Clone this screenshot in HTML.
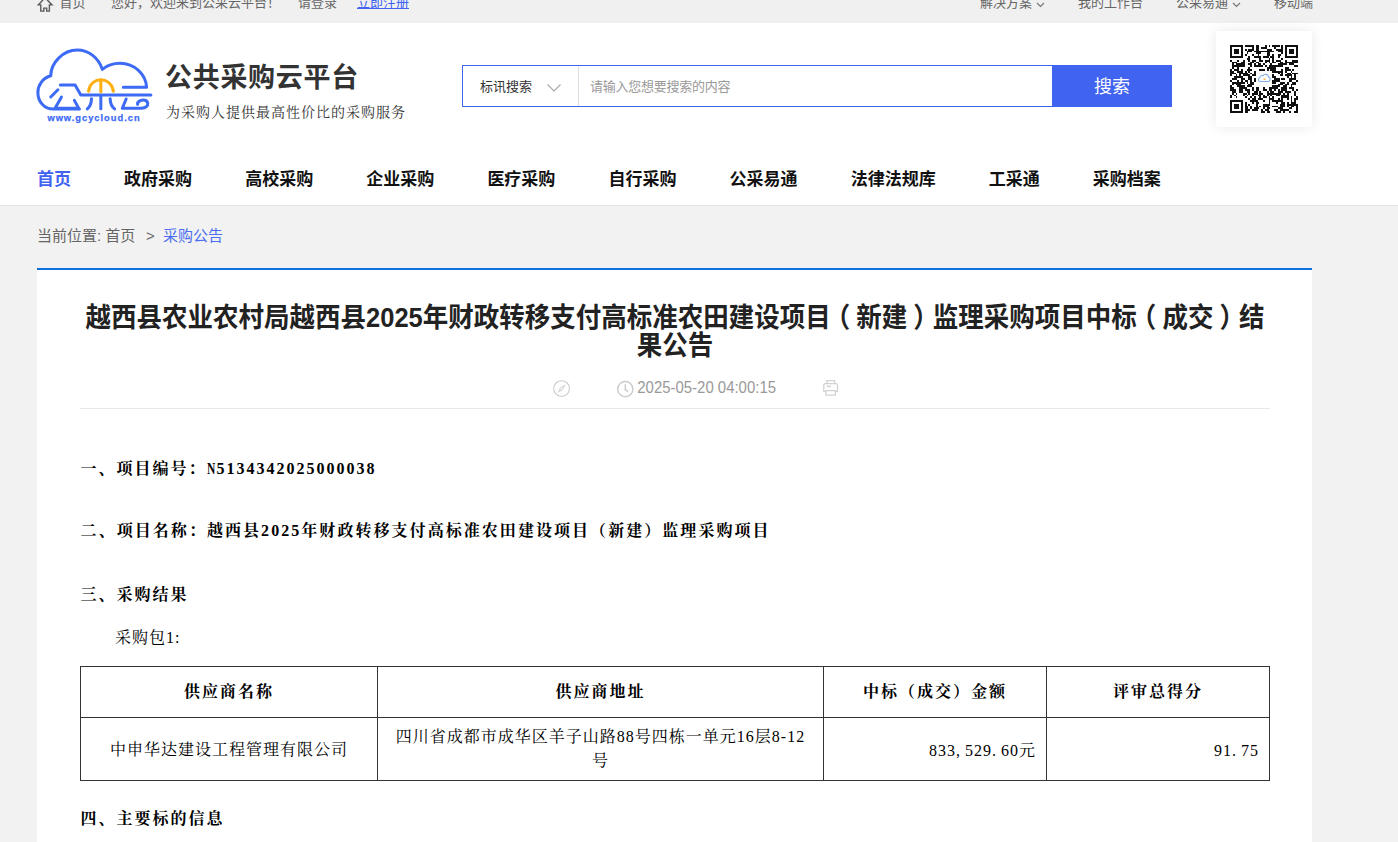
<!DOCTYPE html>
<html lang="zh-CN">
<head>
<meta charset="utf-8">
<title>公共采购云平台</title>
<style>
*{box-sizing:border-box;margin:0;padding:0}
html,body{width:1398px;height:842px;overflow:hidden;background:#f2f2f2}
body{position:relative;font-family:"Liberation Sans","Noto Sans CJK SC",sans-serif;color:#333;-webkit-font-smoothing:antialiased}
.abs{position:absolute;white-space:nowrap}
.topbar{left:0;top:-18px;width:1398px;height:40.5px;background:#f0f0f0;font-size:13px;color:#666}
.topbar span{position:absolute;top:1px;line-height:40px;white-space:nowrap}
.header{left:0;top:22.5px;width:1398px;height:183.5px;background:#fff;border-bottom:1px solid #e4e4e4}
.sitename{left:165px;top:59.3px;font-size:27px;font-weight:700;color:#333;line-height:38px;letter-spacing:0.7px}
.slogan{left:166px;top:102.5px;font-size:14px;line-height:20px;color:#333;font-family:"Liberation Serif","Noto Serif CJK SC",serif;letter-spacing:1px}
.search{left:462px;top:65px;width:590px;height:42px;border:1px solid #4063f0;border-right:0;background:#fff}
.search .sel{position:absolute;left:0;top:0;width:116px;height:40px;border-right:1px solid #ddd;font-size:13px;line-height:42px;padding-left:17px;color:#333}
.search .ph{position:absolute;left:127px;top:0;line-height:42px;font-size:13px;color:#999;letter-spacing:-0.25px}
.btn{left:1052px;top:65px;width:120px;height:42px;background:#4063f0;color:#fff;font-size:18px;line-height:44px;text-align:center}
.qr{left:1216px;top:31px;width:96px;height:96px;background:#fff;box-shadow:0 0 12px rgba(0,0,0,.09)}
.nav{left:37px;top:165px;font-size:17px;font-weight:700;line-height:30px;color:#111}
.nav span{display:inline-block;margin-right:53.1px}
.nav span.on{color:#4063f0}
.crumb{left:37px;top:225px;font-size:15px;line-height:22px;color:#666}
.crumb b{font-weight:400;color:#4a6cf0}
.card{left:37px;top:268px;width:1275px;height:600px;background:#fff;border-top:2px solid #0f6fdb}
.title{left:80px;top:302.8px;transform:scaleY(1.08);transform-origin:50% 55%;width:1190px;text-align:center;font-size:25.5px;line-height:28px;font-weight:700;color:#222;white-space:nowrap}
.title i{font-style:normal;position:relative}.title .pl{left:-6px}.title .pr{left:6px}
.meta{font-size:14.95px;transform:scaleY(1.08);transform-origin:0 78%;color:#999;line-height:20px}
.hr{left:80px;top:408px;width:1190px;height:1px;background:#e8e8e8}
.bt{font-family:"Liberation Serif","Noto Serif CJK SC",serif;font-size:16px;line-height:24px;color:#000}
.h{font-weight:700;letter-spacing:2px}
.n{display:inline-block;width:10px;transform:scaleX(.72);transform-origin:0 50%}
.p{display:inline-block;width:9px;text-align:left}
table{position:absolute;left:80px;top:666px;width:1189px;border-collapse:collapse;table-layout:fixed;font-family:"Liberation Serif","Noto Serif CJK SC",serif;font-size:16px;color:#000}
td,th{border:1px solid #333;text-align:center;vertical-align:middle;letter-spacing:1px;line-height:24px}
th{height:51px;font-weight:700;letter-spacing:2px}
td{height:63px;padding-top:2px}
td.r{text-align:right;padding-right:10px;padding-top:3px}
</style>
</head>
<body>
<div class="abs topbar">
  <svg style="position:absolute;left:36.5px;top:14px" width="17" height="17" viewBox="0 0 17 17" fill="none" stroke="#5a5a5a" stroke-width="1.4" stroke-linejoin="miter"><path d="M8.1 1.7 1.2 8.9H3.8V15.1H6.8V12.1H9.7V15.1H12.4V8.9H15Z"/></svg>
  <span style="left:59.5px">首页</span>
  <span style="left:111px">您好，欢迎来到公采云平台！</span>
  <span style="left:298px">请登录</span>
  <span style="left:357px;color:#4063f0;text-decoration:underline">立即注册</span>
  <span style="left:980px">解决方案</span>
  <svg style="position:absolute;left:1035.7px;top:20px" width="9" height="6" viewBox="0 0 9 6" fill="none" stroke="#777" stroke-width="1.2"><path d="M1 1l3.5 3.5L8 1"/></svg>
  <span style="left:1078px">我的工作台</span>
  <span style="left:1176px">公采易通</span>
  <svg style="position:absolute;left:1231.7px;top:20px" width="9" height="6" viewBox="0 0 9 6" fill="none" stroke="#777" stroke-width="1.2"><path d="M1 1l3.5 3.5L8 1"/></svg>
  <span style="left:1274px">移动端</span>
</div>
<div class="abs header"></div>

<svg class="abs" style="left:0;top:0" width="230" height="140" viewBox="0 0 230 140">
 <g transform="translate(20,30) scale(0.14306)" fill="none" stroke="#3d6bf5" stroke-width="21" stroke-linecap="round" stroke-linejoin="round">
  <path d="M415 552 H232 C170 552 125 500 125 438 C125 385 160 335 215 320 C215 230 300 140 400 140 C480 140 550 195 575 275 C610 245 655 232 700 232 C800 232 880 310 885 400 H722"/>
  <path d="M265 418 L215 468"/>
  <path d="M282 385 H385 L425 455 H915"/>
  <path d="M290 468 L245 547 H405"/>
  <path d="M380 492 L412 550"/>
  <path d="M565 462 V550"/>
  <path d="M500 480 C498 515 490 538 470 552"/>
  <path d="M630 480 C632 515 640 538 662 552"/>
  <path d="M742 482 L715 547 H850 C880 547 895 530 893 512 C890 490 860 485 838 495 C825 502 820 512 822 520"/>
  <g stroke="#fdae10">
   <path d="M482 415 C490 375 525 348 565 348 C605 348 640 375 650 415"/>
   <path d="M565 350 V432"/>
  </g>
  <g stroke="none" fill="#fdae10"><circle cx="480" cy="426" r="12"/><circle cx="652" cy="426" r="12"/></g>
 </g>
 <text x="94" y="121.3" text-anchor="middle" font-family="Liberation Sans, sans-serif" font-weight="700" font-size="9.3" letter-spacing="1" fill="#3d6bf5" stroke="#3d6bf5" stroke-width="0.25">www.gcycloud.cn</text>
</svg>
<div class="abs sitename">公共采购云平台</div>
<div class="abs slogan">为采购人提供最高性价比的采购服务</div>

<div class="abs search">
  <div class="sel">标讯搜索</div>
  <svg style="position:absolute;left:83.3px;top:16.5px" width="16" height="10" viewBox="0 0 16 10" fill="none" stroke="#aaa" stroke-width="1.2"><path d="M1.5 1.5 8 8l6.5-6.5"/></svg>
  <div class="ph">请输入您想要搜索的内容</div>
</div>
<div class="abs btn">搜索</div>
<div class="abs qr">
  <svg style="position:absolute;left:14px;top:14px" width="68" height="68" viewBox="0 0 37 37" shape-rendering="crispEdges"><path fill="#111" d="M0 0h7v1h-7zM8 0h5v1h-5zM14 0h2v1h-2zM19 0h1v1h-1zM21 0h1v1h-1zM23 0h4v1h-4zM28 0h1v1h-1zM30 0h7v1h-7zM0 1h1v1h-1zM6 1h1v1h-1zM12 1h1v1h-1zM14 1h2v1h-2zM17 1h3v1h-3zM24 1h1v1h-1zM28 1h1v1h-1zM30 1h1v1h-1zM36 1h1v1h-1zM0 2h1v1h-1zM2 2h3v1h-3zM6 2h1v1h-1zM8 2h1v1h-1zM10 2h3v1h-3zM14 2h2v1h-2zM20 2h3v1h-3zM25 2h4v1h-4zM30 2h1v1h-1zM32 2h3v1h-3zM36 2h1v1h-1zM0 3h1v1h-1zM2 3h3v1h-3zM6 3h1v1h-1zM9 3h3v1h-3zM13 3h11v1h-11zM26 3h3v1h-3zM30 3h1v1h-1zM32 3h3v1h-3zM36 3h1v1h-1zM0 4h1v1h-1zM2 4h3v1h-3zM6 4h1v1h-1zM9 4h1v1h-1zM14 4h3v1h-3zM20 4h2v1h-2zM28 4h1v1h-1zM30 4h1v1h-1zM32 4h3v1h-3zM36 4h1v1h-1zM0 5h1v1h-1zM6 5h1v1h-1zM8 5h1v1h-1zM12 5h1v1h-1zM15 5h1v1h-1zM20 5h2v1h-2zM23 5h1v1h-1zM26 5h2v1h-2zM30 5h1v1h-1zM36 5h1v1h-1zM0 6h7v1h-7zM10 6h1v1h-1zM13 6h4v1h-4zM18 6h3v1h-3zM22 6h2v1h-2zM26 6h1v1h-1zM30 6h7v1h-7zM9 7h2v1h-2zM16 7h1v1h-1zM21 7h1v1h-1zM23 7h1v1h-1zM28 7h1v1h-1zM0 8h1v1h-1zM4 8h1v1h-1zM7 8h1v1h-1zM10 8h1v1h-1zM12 8h2v1h-2zM16 8h2v1h-2zM19 8h3v1h-3zM23 8h1v1h-1zM25 8h3v1h-3zM30 8h1v1h-1zM34 8h3v1h-3zM1 9h3v1h-3zM6 9h2v1h-2zM11 9h2v1h-2zM14 9h2v1h-2zM19 9h1v1h-1zM21 9h1v1h-1zM23 9h2v1h-2zM27 9h2v1h-2zM30 9h7v1h-7zM1 10h1v1h-1zM3 10h5v1h-5zM10 10h2v1h-2zM13 10h1v1h-1zM15 10h2v1h-2zM18 10h1v1h-1zM22 10h1v1h-1zM26 10h5v1h-5zM32 10h3v1h-3zM1 11h7v1h-7zM11 11h1v1h-1zM13 11h5v1h-5zM19 11h1v1h-1zM21 11h8v1h-8zM35 11h2v1h-2zM1 12h1v1h-1zM4 12h1v1h-1zM10 12h1v1h-1zM20 12h5v1h-5zM30 12h2v1h-2zM0 13h1v1h-1zM2 13h3v1h-3zM6 13h1v1h-1zM9 13h3v1h-3zM16 13h3v1h-3zM20 13h1v1h-1zM22 13h3v1h-3zM28 13h1v1h-1zM30 13h3v1h-3zM34 13h1v1h-1zM0 14h2v1h-2zM4 14h3v1h-3zM8 14h1v1h-1zM10 14h1v1h-1zM13 14h1v1h-1zM23 14h6v1h-6zM30 14h1v1h-1zM33 14h1v1h-1zM0 15h3v1h-3zM5 15h5v1h-5zM11 15h1v1h-1zM13 15h1v1h-1zM26 15h1v1h-1zM28 15h1v1h-1zM31 15h2v1h-2zM34 15h3v1h-3zM0 16h1v1h-1zM3 16h1v1h-1zM5 16h1v1h-1zM7 16h4v1h-4zM12 16h2v1h-2zM23 16h1v1h-1zM27 16h2v1h-2zM30 16h4v1h-4zM35 16h1v1h-1zM2 17h5v1h-5zM10 17h2v1h-2zM23 17h2v1h-2zM31 17h1v1h-1zM33 17h1v1h-1zM35 17h1v1h-1zM1 18h3v1h-3zM6 18h2v1h-2zM10 18h2v1h-2zM13 18h1v1h-1zM24 18h3v1h-3zM28 18h2v1h-2zM32 18h4v1h-4zM0 19h1v1h-1zM4 19h1v1h-1zM6 19h1v1h-1zM8 19h2v1h-2zM11 19h1v1h-1zM13 19h1v1h-1zM23 19h4v1h-4zM32 19h2v1h-2zM36 19h1v1h-1zM1 20h7v1h-7zM9 20h1v1h-1zM11 20h2v1h-2zM23 20h2v1h-2zM27 20h3v1h-3zM31 20h1v1h-1zM34 20h2v1h-2zM1 21h1v1h-1zM3 21h3v1h-3zM10 21h3v1h-3zM26 21h3v1h-3zM30 21h2v1h-2zM33 21h3v1h-3zM0 22h1v1h-1zM4 22h4v1h-4zM9 22h3v1h-3zM23 22h4v1h-4zM29 22h2v1h-2zM33 22h1v1h-1zM0 23h2v1h-2zM5 23h4v1h-4zM12 23h1v1h-1zM14 23h2v1h-2zM18 23h1v1h-1zM21 23h5v1h-5zM28 23h3v1h-3zM32 23h3v1h-3zM0 24h3v1h-3zM5 24h2v1h-2zM8 24h3v1h-3zM12 24h1v1h-1zM14 24h2v1h-2zM18 24h2v1h-2zM21 24h2v1h-2zM24 24h1v1h-1zM26 24h1v1h-1zM28 24h3v1h-3zM34 24h1v1h-1zM36 24h1v1h-1zM1 25h2v1h-2zM5 25h2v1h-2zM9 25h2v1h-2zM13 25h2v1h-2zM16 25h1v1h-1zM20 25h1v1h-1zM22 25h2v1h-2zM26 25h3v1h-3zM30 25h3v1h-3zM35 25h1v1h-1zM1 26h1v1h-1zM3 26h1v1h-1zM7 26h2v1h-2zM10 26h1v1h-1zM12 26h3v1h-3zM16 26h2v1h-2zM20 26h8v1h-8zM29 26h1v1h-1zM31 26h1v1h-1zM35 26h1v1h-1zM0 27h1v1h-1zM2 27h1v1h-1zM7 27h1v1h-1zM9 27h1v1h-1zM12 27h1v1h-1zM15 27h2v1h-2zM18 27h1v1h-1zM20 27h1v1h-1zM22 27h1v1h-1zM25 27h2v1h-2zM28 27h4v1h-4zM35 27h1v1h-1zM0 28h1v1h-1zM3 28h1v1h-1zM8 28h1v1h-1zM11 28h1v1h-1zM13 28h1v1h-1zM16 28h1v1h-1zM18 28h2v1h-2zM21 28h1v1h-1zM23 28h1v1h-1zM28 28h4v1h-4zM33 28h1v1h-1zM36 28h1v1h-1zM10 29h1v1h-1zM12 29h2v1h-2zM15 29h3v1h-3zM21 29h3v1h-3zM26 29h1v1h-1zM28 29h1v1h-1zM31 29h1v1h-1zM33 29h1v1h-1zM35 29h2v1h-2zM0 30h7v1h-7zM11 30h4v1h-4zM18 30h1v1h-1zM21 30h1v1h-1zM23 30h6v1h-6zM33 30h1v1h-1zM35 30h1v1h-1zM0 31h1v1h-1zM6 31h1v1h-1zM8 31h1v1h-1zM12 31h1v1h-1zM14 31h2v1h-2zM21 31h1v1h-1zM25 31h1v1h-1zM28 31h2v1h-2zM31 31h1v1h-1zM33 31h3v1h-3zM0 32h1v1h-1zM2 32h3v1h-3zM6 32h1v1h-1zM8 32h1v1h-1zM10 32h1v1h-1zM14 32h1v1h-1zM18 32h4v1h-4zM27 32h3v1h-3zM31 32h6v1h-6zM0 33h1v1h-1zM2 33h3v1h-3zM6 33h1v1h-1zM8 33h2v1h-2zM11 33h1v1h-1zM14 33h1v1h-1zM16 33h1v1h-1zM18 33h3v1h-3zM23 33h3v1h-3zM27 33h3v1h-3zM31 33h1v1h-1zM33 33h2v1h-2zM36 33h1v1h-1zM0 34h1v1h-1zM2 34h3v1h-3zM6 34h1v1h-1zM8 34h2v1h-2zM11 34h1v1h-1zM13 34h3v1h-3zM18 34h1v1h-1zM20 34h2v1h-2zM26 34h3v1h-3zM32 34h2v1h-2zM36 34h1v1h-1zM0 35h1v1h-1zM6 35h1v1h-1zM8 35h3v1h-3zM12 35h3v1h-3zM17 35h1v1h-1zM19 35h2v1h-2zM24 35h2v1h-2zM27 35h5v1h-5zM36 35h1v1h-1zM0 36h7v1h-7zM8 36h2v1h-2zM17 36h2v1h-2zM20 36h2v1h-2zM25 36h3v1h-3zM29 36h1v1h-1zM32 36h1v1h-1zM35 36h2v1h-2z"/>
  <g shape-rendering="auto" fill="none" stroke="#7fb0e8" stroke-width="0.6"><path d="M16.3 19.9h4.6a1.3 1.3 0 0 0 .1-2.5 1.7 1.7 0 0 0-3.1-.7 1.2 1.2 0 0 0-1.7 1.1 1.1 1.1 0 0 0 .1 2.1z"/><path d="M18.2 18.6h1.2" stroke="#f5a623"/></g></svg>
</div>

<div class="abs nav"><span class="on">首页</span><span>政府采购</span><span>高校采购</span><span>企业采购</span><span>医疗采购</span><span>自行采购</span><span>公采易通</span><span>法律法规库</span><span>工采通</span><span>采购档案</span></div>

<div class="abs crumb">当前位置: 首页</div><div class="abs crumb" style="left:146px">&gt;</div><div class="abs crumb" style="left:163px"><b>采购公告</b></div>

<div class="abs card"></div>
<div class="abs title">越西县农业农村局越西县2025年财政转移支付高标准农田建设项目<i class="pl">（</i>新建<i class="pr">）</i>监理采购项目中标<i class="pl">（</i>成交<i class="pr">）</i>结</div>
<div class="abs title" style="top:330.8px">果公告</div>

<svg class="abs" style="left:552px;top:379px" width="20" height="20" viewBox="0 0 20 20" fill="none" stroke="#ccc" stroke-width="1.1"><circle cx="9.6" cy="9.6" r="7.9"/><path d="M13.9 5.3 8.3 8.3 5.3 13.9l5.6-3z" fill="#d8d8d8" stroke="none"/><circle cx="9.6" cy="9.6" r="1" fill="#fff" stroke="none"/></svg>
<svg class="abs" style="left:616px;top:380px" width="20" height="20" viewBox="0 0 20 20" fill="none" stroke="#ccc" stroke-width="1.5"><circle cx="9.3" cy="9.2" r="7.6"/><path d="M9.3 4.3v5.6l2.8 1.6"/></svg>
<div class="abs meta" style="left:637.3px;top:378px">2025-05-20 04:00:15</div>
<svg class="abs" style="left:820px;top:376px" width="24" height="24" viewBox="0 0 24 24" fill="none" stroke="#d2d2d2" stroke-width="1.25"><path d="M6.9 7.6V4.7h7.7v2.9M5.8 15.3H3.8V9.1a1.4 1.4 0 0 1 1.4-1.4h10.9a1.4 1.4 0 0 1 1.4 1.4v6.2h-2"/><path d="M5.9 14.7h9.5v4.5H5.9z"/><path d="M6.6 10.4h4.4" stroke-width="1.5"/></svg>
<div class="abs hr"></div>

<div class="abs bt h" style="left:80.6px;top:456.7px">一、项目编号：<span class="n">N</span>5134342025000038</div>
<div class="abs bt h" style="left:80.6px;top:518.8px;letter-spacing:2.05px">二、项目名称：越西县2025年财政转移支付高标准农田建设项目（新建）监理采购项目</div>
<div class="abs bt h" style="left:80.6px;top:582.6px">三、采购结果</div>
<div class="abs bt" style="left:115px;top:626.3px;letter-spacing:1px">采购包1:</div>

<table>
<colgroup><col style="width:297px"><col style="width:446px"><col style="width:223px"><col style="width:223px"></colgroup>
<tr><th>供应商名称</th><th>供应商地址</th><th>中标（成交）金额</th><th>评审总得分</th></tr>
<tr><td>中申华达建设工程管理有限公司</td><td style="padding:0 16px">四川省成都市成华区羊子山路88号四栋一单元16层8-12号</td><td class="r">833<span class="p">,</span>529<span class="p">.</span>60元</td><td class="r">91<span class="p">.</span>75</td></tr>
</table>
<div class="abs bt h" style="left:80.6px;top:807px">四、主要标的信息</div>
</body>
</html>
